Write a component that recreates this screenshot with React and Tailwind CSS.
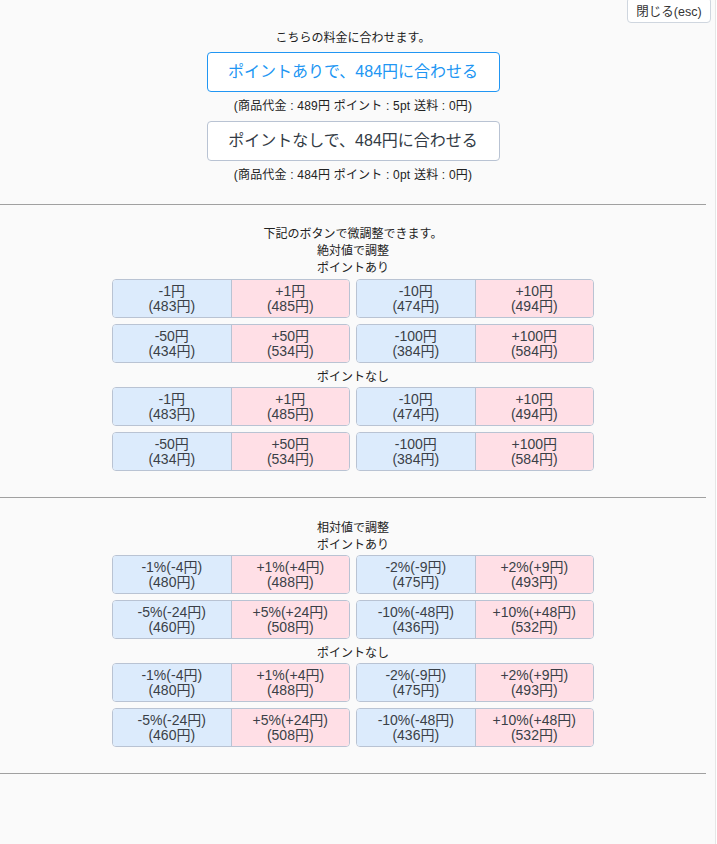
const abs1 = [
  [["-1円", "(483円)"], ["+1円", "(485円)"], ["-10円", "(474円)"], ["+10円", "(494円)"]],
  [["-50円", "(434円)"], ["+50円", "(534円)"], ["-100円", "(384円)"], ["+100円", "(584円)"]],
]

const rel1 = [
  [["-1%(-4円)", "(480円)"], ["+1%(+4円)", "(488円)"], ["-2%(-9円)", "(475円)"], ["+2%(+9円)", "(493円)"]],
  [["-5%(-24円)", "(460円)"], ["+5%(+24円)", "(508円)"], ["-10%(-48円)", "(436円)"], ["+10%(+48円)", "(532円)"]],
]

function Cell({ lines, plus }) {
  return (
    <button
      className={
        'flex-1 h-full flex flex-col items-center justify-center text-[14px] leading-[14.5px] text-[#3a3f47] ' +
        (plus ? 'bg-[#ffdfe6]' : 'bg-[#dcebfc] border-r border-[#b9c3d3]')
      }
    >
      <span>{lines[0]}</span>
      <span>{lines[1]}</span>
    </button>
  )
}

function Grid({ rows }) {
  return (
    <div className="flex flex-col gap-[6px] items-center">
      {rows.map((row, i) => (
        <div key={i} className="flex gap-[6px]">
          <div className="flex w-[238px] h-[39px] border border-[#b9c3d3] rounded-[4px] overflow-hidden">
            <Cell lines={row[0]} />
            <Cell lines={row[1]} plus />
          </div>
          <div className="flex w-[238px] h-[39px] border border-[#b9c3d3] rounded-[4px] overflow-hidden">
            <Cell lines={row[2]} />
            <Cell lines={row[3]} plus />
          </div>
        </div>
      ))}
    </div>
  )
}

function Label({ children }) {
  return <div className="text-[12px] leading-[17px] text-[#222]">{children}</div>
}

export default function App() {
  return (
    <div
      className="relative w-[716px] min-h-[844px] bg-[#fafafa] text-[#222] border-r border-[#e6e6e6]"
      style={{ fontFamily: '"Liberation Sans", "Noto Sans CJK JP", sans-serif' }}
    >
      {/* 閉じる */}
      <button className="absolute right-[4px] top-[-3px] h-[26px] w-[84px] pt-[3px] bg-white border border-[#cfd6df] rounded-[4px] text-[12.5px] leading-[16px] text-[#333]">
        閉じる(esc)
      </button>

      <div className="w-[706px]">
        {/* 合わせる */}
        <div className="pt-[30px] flex flex-col items-center text-center">
          <Label>こちらの料金に合わせます。</Label>
          <button className="mt-[5px] w-[293px] h-[40px] bg-white border border-[#2196f3] rounded-[4px] text-[16px] text-[#2196f3]">
            ポイントありで、484円に合わせる
          </button>
          <div className="mt-[6px] tracking-[0.2px]">
            <Label>(商品代金 : 489円 ポイント : 5pt 送料 : 0円)</Label>
          </div>
          <button className="mt-[6px] w-[293px] h-[40px] bg-white border border-[#b9c3d3] rounded-[4px] text-[16px] text-[#333b45]">
            ポイントなしで、484円に合わせる
          </button>
          <div className="mt-[6px] tracking-[0.2px]">
            <Label>(商品代金 : 484円 ポイント : 0pt 送料 : 0円)</Label>
          </div>
        </div>

        <hr className="mt-[20px] border-t border-[#a0a0a0]" />

        {/* 絶対値 */}
        <div className="pt-[21px] flex flex-col items-center text-center">
          <Label>下記のボタンで微調整できます。</Label>
          <Label>絶対値で調整</Label>
          <Label>ポイントあり</Label>
          <div className="mt-[2px]">
            <Grid rows={abs1} />
          </div>
          <div className="mt-[6px]">
            <Label>ポイントなし</Label>
          </div>
          <div className="mt-[1px]">
            <Grid rows={abs1} />
          </div>
        </div>

        <hr className="mt-[26px] border-t border-[#a0a0a0]" />

        {/* 相対値 */}
        <div className="pt-[22px] flex flex-col items-center text-center">
          <Label>相対値で調整</Label>
          <Label>ポイントあり</Label>
          <div className="mt-[1px]">
            <Grid rows={rel1} />
          </div>
          <div className="mt-[6px]">
            <Label>ポイントなし</Label>
          </div>
          <div className="mt-[1px]">
            <Grid rows={rel1} />
          </div>
        </div>

        <hr className="mt-[26px] border-t border-[#a0a0a0]" />
      </div>
    </div>
  )
}
